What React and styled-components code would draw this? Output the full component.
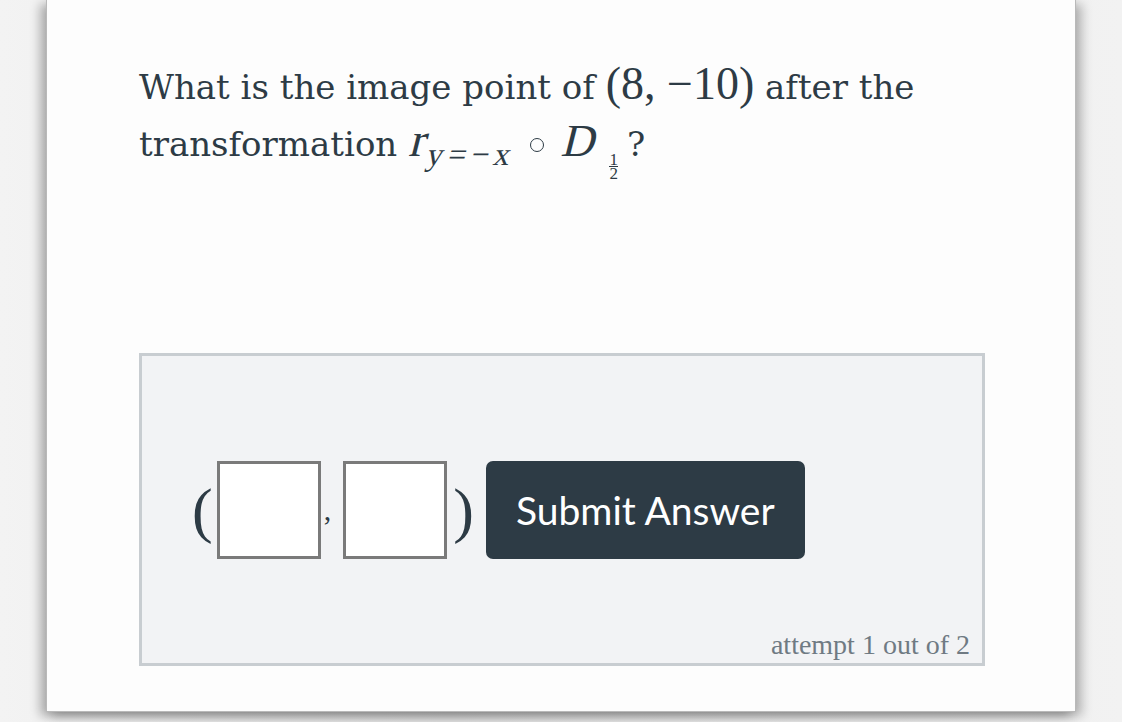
import React from "react";
import styled, { createGlobalStyle } from "styled-components";

const Global = createGlobalStyle`
  html, body {
    margin: 0;
    padding: 0;
    width: 1122px;
    height: 722px;
    overflow: hidden;
    background: #ececec;
  }
`;

const Page = styled.div`
  width: 1122px;
  height: 722px;
  display: flex;
  align-items: flex-start;
  background: linear-gradient(90deg, #f3f3f3 0%, #e6e6e6 40%, #ebebeb 60%, #f2f2f2 100%);
`;

const Card = styled.div`
  margin-left: 46px;
  width: 1030px;
  height: 712px;
  background: #fdfdfd;
  border: 1px solid #b9b9b9;
  border-top: none;
  box-shadow: -6px 4px 10px rgba(0, 0, 0, 0.28), 6px 4px 10px rgba(0, 0, 0, 0.25);
  display: flex;
  flex-direction: column;
  padding: 55px 0 0 92px;
  box-sizing: border-box;
`;

const Question = styled.div`
  height: 135px;
  font-family: "DejaVu Serif", Georgia, serif;
  font-size: 34px;
  line-height: 57px;
  color: #2d3b45;
`;

const M = styled.span`
  font-family: "Liberation Serif", serif;
  font-size: 46px;
`;

// italic math letters: slanted upright serif, since italic faces fall back to sans
const MI = styled.span`
  display: inline-block;
  font-family: "Liberation Serif", serif;
  font-size: ${({ $size }) => $size || "46px"};
  transform: skewX(-14deg);
  line-height: 1;
  margin: ${({ $m }) => $m || "0"};
`;

const Sub = styled(MI)`
  position: relative;
  top: 9px;
  letter-spacing: 5px;
`;

const Compose = styled.span`
  display: inline-block;
  width: 12px;
  height: 12px;
  border: 1.6px solid #2d3b45;
  border-radius: 50%;
  vertical-align: 4px;
  margin: 0 18px 0 14px;
`;

const Frac = styled.span`
  display: inline-flex;
  flex-direction: column;
  align-items: center;
  font-family: "Liberation Serif", serif;
  font-size: 17px;
  line-height: 12px;
  vertical-align: -9px;
  margin: 0 9px 0 12px;
  span + span {
    border-top: 1px solid #2d3b45;
    padding-top: 1px;
  }
`;

const AnswerBox = styled.div`
  margin-top: 163px;
  width: 846px;
  height: 313px;
  box-sizing: border-box;
  background: #f2f3f5;
  border: 3px solid #c8cdd1;
  display: flex;
  flex-direction: column;
  padding: 105px 10px 0 50px;
`;

const Row = styled.div`
  display: flex;
  align-items: center;
`;

const Paren = styled.span`
  font-family: "Liberation Serif", serif;
  font-size: 62px;
  color: #2d3b45;
  line-height: 1;
  margin: ${({ $m }) => $m};
`;

const Cell = styled.div`
  width: 98px;
  height: 92px;
  background: #fff;
  border: 3px solid #7a7a7a;
`;

const Comma = styled.span`
  font-family: "Liberation Serif", serif;
  font-size: 30px;
  color: #2d3b45;
  align-self: flex-end;
  margin: 0 12px 32px 3px;
`;

const Submit = styled.button`
  margin-left: 12px;
  width: 319px;
  height: 98px;
  background: #2d3b45;
  color: #fff;
  border: none;
  border-radius: 7px;
  font-family: Lato, "Liberation Sans", sans-serif;
  font-size: 39px;
`;

const Attempt = styled.div`
  margin-top: auto;
  margin-bottom: 2px;
  margin-right: 2px;
  align-self: flex-end;
  font-family: "Liberation Serif", Georgia, serif;
  font-size: 28px;
  color: #6f7a83;
`;

export default function App() {
  return (
    <>
      <Global />
      <Page>
        <Card>
          <Question>
            What is the image point of <M>(8, −10)</M> after the
            <br />
            transformation <MI $size="48px" $m="0 0 0 4px">r</MI>
            <Sub $size="32px">y=−x</Sub>
            <Compose />
            <MI $m="0 0 0 2px">D</MI>
            <Frac>
              <span>1</span>
              <span>2</span>
            </Frac>
            ?
          </Question>
          <AnswerBox>
            <Row>
              <Paren $m="0 4px 0 0">(</Paren>
              <Cell />
              <Comma>,</Comma>
              <Cell />
              <Paren $m="0 0 0 6px">)</Paren>
              <Submit>Submit Answer</Submit>
            </Row>
            <Attempt>attempt 1 out of 2</Attempt>
          </AnswerBox>
        </Card>
      </Page>
    </>
  );
}
